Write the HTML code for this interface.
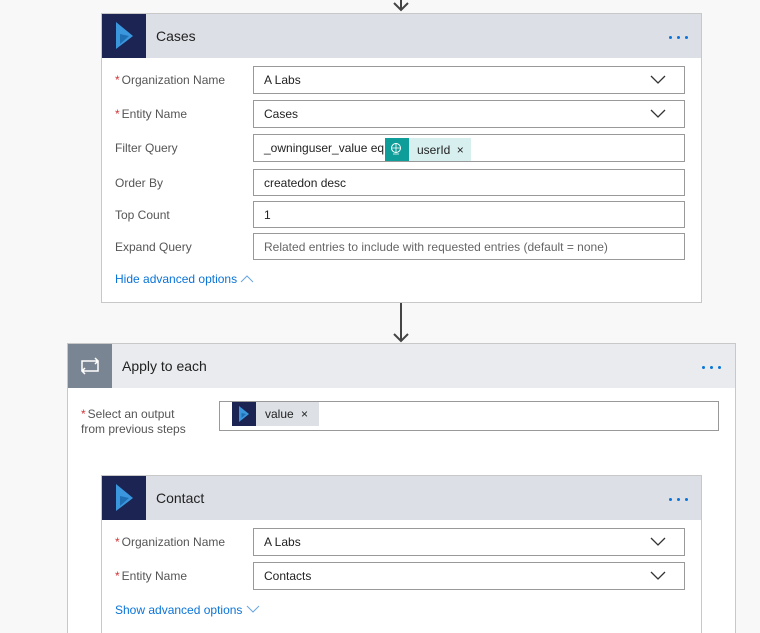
<!DOCTYPE html>
<html style="overflow:hidden;height:633px"><head><meta charset="utf-8"><style>
*{box-sizing:border-box;margin:0;padding:0}
body{width:760px;height:633px;background:#f8f8f8;position:relative;overflow:hidden;font-family:"Segoe UI","Liberation Sans",sans-serif;font-size:12px;color:#333}
.a{position:absolute}
.card{position:absolute;background:#fff;border:1px solid #c8c8c8}
.hdr{position:absolute;left:0;right:0;top:0;height:44px;background:#dcdfe6}
.ic{position:absolute;left:0;top:0;width:44px;height:44px;background:#1b2452}
.ttl{position:absolute;top:14px;font-size:14px;color:#222}
.dots{position:absolute;top:22px;width:20px;height:3px}
.dots i{position:absolute;top:0;width:3px;height:3px;border-radius:50%;background:#0a74d8}
.lbl{position:absolute;color:#555;font-size:12px}
.lbl b{color:#d13438;font-weight:normal;margin-right:2px}
.inp{position:absolute;border:1px solid #999;background:#fff;height:28px;padding:6px 10px;font-size:12px;color:#222;white-space:nowrap}
.chev{position:absolute;right:18px;top:8px}
.link{position:absolute;color:#0a74d8;font-size:12px}
.tok{white-space:nowrap}
</style></head><body>
<svg class="a" style="left:392px;top:0" width="18" height="12"><path d="M9 0V10M2 3L9 10L16 3" stroke="#444" stroke-width="2" fill="none"/></svg>
<div class="card" style="left:101px;top:13px;width:601px;height:290px">
 <div class="hdr"><div class="ic"><svg width="44" height="44"><path d="M14 8L31 22L14 35Z" fill="#3a96dd"/><path d="M18 20L27 22L18 30Z" fill="#1f6fb5"/></svg></div>
 <div class="ttl" style="left:54px">Cases</div><div class="dots" style="left:567px"><i style="left:0"></i><i style="left:8px"></i><i style="left:16px"></i></div></div>
 <div class="lbl" style="left:13px;top:59px"><b>*</b>Organization Name</div>
 <div class="inp" style="left:151px;top:52px;width:432px">A Labs<svg class="chev" width="16" height="10"><path d="M1 1L8 8L15 1" stroke="#333" stroke-width="1.3" fill="none"/></svg></div>
 <div class="lbl" style="left:13px;top:93px"><b>*</b>Entity Name</div>
 <div class="inp" style="left:151px;top:86px;width:432px">Cases<svg class="chev" width="16" height="10"><path d="M1 1L8 8L15 1" stroke="#333" stroke-width="1.3" fill="none"/></svg></div>
 <div class="lbl" style="left:13px;top:127px">Filter Query</div>
 <div class="inp" style="left:151px;top:120px;width:432px;padding-left:10px">_owninguser_value eq</div>
 <div class="a" style="left:283px;top:124px;width:24px;height:23px;background:#0f9d9a"><svg width="24" height="23"><circle cx="11" cy="10" r="4.5" stroke="#fff" fill="none"/><path d="M6.5 10H15.5M11 5.5V14.5M8 16H14" stroke="#fff" stroke-width="0.8"/></svg></div>
 <div class="a tok" style="left:307px;top:124px;width:62px;height:23px;background:#d8eff0;padding:5px 8px;color:#222">userId <span style="margin-left:3px">×</span></div>
 <div class="lbl" style="left:13px;top:162px">Order By</div>
 <div class="inp" style="left:151px;top:155px;width:432px;height:27px">createdon desc</div>
 <div class="lbl" style="left:13px;top:194px">Top Count</div>
 <div class="inp" style="left:151px;top:187px;width:432px;height:27px">1</div>
 <div class="lbl" style="left:13px;top:226px">Expand Query</div>
 <div class="inp" style="left:151px;top:219px;width:432px;height:27px;color:#666">Related entries to include with requested entries (default = none)</div>
 <div class="link" style="left:13px;top:258px">Hide advanced options <svg width="14" height="9"><path d="M1 8L7 2L13 8" stroke="#6aa6e0" fill="none"/></svg></div>
</div>
<svg class="a" style="left:392px;top:303px" width="18" height="40"><path d="M9 0V38M2 31L9 38L16 31" stroke="#444" stroke-width="2" fill="none"/></svg>
<div class="card" style="left:67px;top:343px;width:669px;height:295px">
 <div class="hdr" style="background:#e9ebee"><div class="ic" style="background:#7a8593"><svg width="44" height="44"><path d="M14 27V17H30M27 14L30 17L27 20M30 17V27H14M17 30L14 27L17 24" stroke="#fff" stroke-width="1.5" fill="none"/></svg></div>
 <div class="ttl" style="left:54px">Apply to each</div><div class="dots" style="left:634px"><i style="left:0"></i><i style="left:8px"></i><i style="left:16px"></i></div></div>
 <div class="lbl" style="left:13px;top:63px;line-height:15px"><b>*</b>Select an output<br>from previous steps</div>
 <div class="inp" style="left:151px;top:57px;width:500px;height:30px"></div>
 <div class="a" style="left:164px;top:58px;width:24px;height:24px;background:#1b2452"><svg width="24" height="24"><path d="M7 4L17 12L7 20Z" fill="#3a96dd"/><path d="M9.5 11L14 12L9.5 16Z" fill="#1f6fb5"/></svg></div>
 <div class="a tok" style="left:188px;top:58px;width:63px;height:24px;background:#dde0e5;padding:5px 9px;color:#222">value <span style="margin-left:4px">×</span></div>
 <div class="card" style="left:33px;top:131px;width:601px;height:170px">
  <div class="hdr"><div class="ic"><svg width="44" height="44"><path d="M14 8L31 22L14 35Z" fill="#3a96dd"/><path d="M18 20L27 22L18 30Z" fill="#1f6fb5"/></svg></div>
  <div class="ttl" style="left:54px">Contact</div><div class="dots" style="left:567px"><i style="left:0"></i><i style="left:8px"></i><i style="left:16px"></i></div></div>
  <div class="lbl" style="left:13px;top:59px"><b>*</b>Organization Name</div>
  <div class="inp" style="left:151px;top:52px;width:432px">A Labs<svg class="chev" width="16" height="10"><path d="M1 1L8 8L15 1" stroke="#333" stroke-width="1.3" fill="none"/></svg></div>
  <div class="lbl" style="left:13px;top:93px"><b>*</b>Entity Name</div>
  <div class="inp" style="left:151px;top:86px;width:432px">Contacts<svg class="chev" width="16" height="10"><path d="M1 1L8 8L15 1" stroke="#333" stroke-width="1.3" fill="none"/></svg></div>
  <div class="link" style="left:13px;top:127px">Show advanced options <svg width="14" height="9"><path d="M1 1L7 7L13 1" stroke="#6aa6e0" fill="none"/></svg></div>
 </div>
</div>
</body></html>
